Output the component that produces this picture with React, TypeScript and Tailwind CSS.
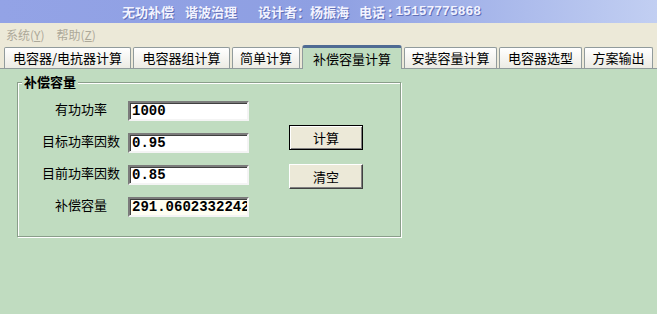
import React from 'react';

const cjk = { fontFamily: '"Noto Sans CJK SC", "Noto Sans", sans-serif' };
const mono = { fontFamily: '"Liberation Mono", "Noto Sans CJK SC", monospace' };

const tabs = [
  { label: '电容器/电抗器计算', w: 'w-[127px]' },
  { label: '电容器组计算', w: 'w-[97px]' },
  { label: '简单计算', w: 'w-[68px]' },
  { label: '补偿容量计算', w: 'w-[100px]', active: true },
  { label: '安装容量计算', w: 'w-[93px]' },
  { label: '电容器选型', w: 'w-[83px]' },
  { label: '方案输出', w: 'w-[69px]' },
];

const rows = [
  { label: '有功功率', value: '1000' },
  { label: '目标功率因数', value: '0.95' },
  { label: '目前功率因数', value: '0.85' },
  { label: '补偿容量', value: '291.0602332242317', readOnly: true },
];

const Field = ({ value, readOnly }: { value: string; readOnly?: boolean }) => (
  <div
    className={`w-[121px] h-[20px] overflow-hidden whitespace-nowrap border-2 border-t-[#7b7b7b] border-l-[#7b7b7b] border-b-[#f4f4f4] border-r-[#f4f4f4] shadow-[inset_1px_1px_0_#404040] pl-[2px] text-[14px] font-bold leading-[16px] text-black ${
      readOnly ? 'bg-[#fefef2]' : 'bg-white'
    }`}
    style={mono}
  >
    {value}
  </div>
);

const Btn = ({ label, primary }: { label: string; primary?: boolean }) => (
  <div
    className={`w-[74px] h-[25px] flex items-center justify-center text-[13px] text-black bg-[#ece9d8] ${
      primary
        ? 'border border-black shadow-[inset_1px_1px_0_#fff,inset_-1px_-1px_0_#808080]'
        : 'border border-t-white border-l-white border-b-[#404040] border-r-[#404040] shadow-[inset_-1px_-1px_0_#808080]'
    }`}
    style={cjk}
  >
    {label}
  </div>
);

export default function App() {
  return (
    <div className="w-[657px] h-[314px] flex flex-col bg-[#ece9d8] overflow-hidden" style={cjk}>
      {/* title bar */}
      <div className="h-[23px] flex items-center pl-[122px] bg-gradient-to-r from-[#93a3e6] via-[#8e9fe2] to-[#c2cff2] text-[13px] font-bold text-[#f2f3ff] [text-shadow:1px_1px_0_#5f6fb8] whitespace-pre">
        <span>无功补偿</span>
        <span className="ml-[11px]">谐波治理</span>
        <span className="ml-[21px]">设计者：杨振海</span>
        <span className="ml-[10px]">电话</span>
        <span className="mx-[3px]">:</span>
        <span style={mono} className="text-[13px]">15157775868</span>
      </div>

      {/* menu bar */}
      <div className="h-[23px] flex items-center pl-[6px] gap-[12px] text-[12px] text-[#aca899]">
        <span>
          系统(<span className="underline">Y</span>)
        </span>
        <span>
          帮助(<span className="underline">Z</span>)
        </span>
      </div>

      {/* tab strip */}
      <div className="h-[22px] flex items-end pl-[4px] gap-[2px]">
        {tabs.map((t) =>
          t.active ? (
            <div
              key={t.label}
              className={`${t.w} h-[24px] -mb-px flex items-center justify-center text-[13px] text-black bg-[#c0dcc0] border border-[#919b9c] border-b-0 border-t-[3px] border-t-[#4f6b93] rounded-t-[3px] relative z-10`}
            >
              {t.label}
            </div>
          ) : (
            <div
              key={t.label}
              className={`${t.w} h-[21px] flex items-center justify-center text-[13px] text-black bg-gradient-to-b from-white to-[#ecebe4] border border-[#919b9c] border-b-0 rounded-t-[2px]`}
            >
              {t.label}
            </div>
          )
        )}
      </div>

      {/* page */}
      <div className="flex-1 bg-[#c0dcc0] border-t border-[#919b9c] pl-[17px] pt-[13px]">
        <div className="relative w-[384px] h-[155px] border border-[#8a9e8a] shadow-[inset_1px_1px_0_#fff,1px_1px_0_#fff] flex">
          <div className="absolute -top-[9px] left-[4px] px-[2px] bg-[#c0dcc0] text-[13px] font-bold leading-[16px] text-black">
            补偿容量
          </div>
          <div className="flex flex-col gap-[12px] pt-[18px] pl-[19px]">
            {rows.map((r) => (
              <div key={r.label} className="flex items-center gap-[3px]">
                <div className="w-[88px] text-center text-[13px] text-black -mt-[4px]">{r.label}</div>
                <Field value={r.value} readOnly={r.readOnly} />
              </div>
            ))}
          </div>
          <div className="flex flex-col gap-[14px] ml-[40px] pt-[42px]">
            <Btn label="计算" primary />
            <Btn label="清空" />
          </div>
        </div>
      </div>
    </div>
  );
}
